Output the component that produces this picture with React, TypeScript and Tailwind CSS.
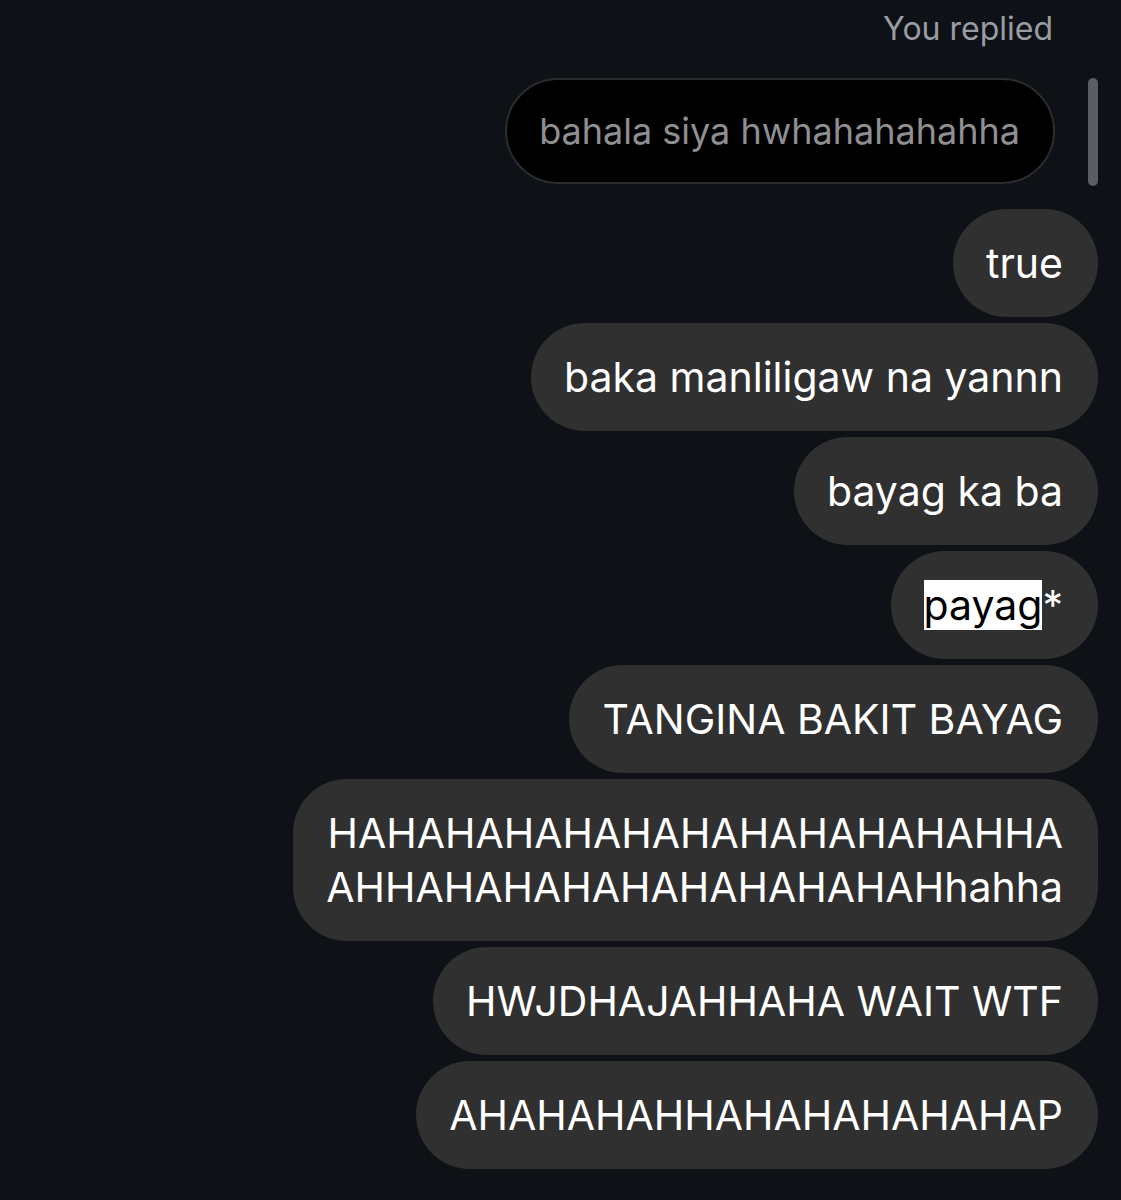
const MESSAGES: string[][] = [
  ['true'],
  ['baka manliligaw na yannn'],
  ['bayag ka ba'],
  [],
  ['TANGINA BAKIT BAYAG'],
  ['HAHAHAHAHAHAHAHAHAHAHAHHA', 'AHHAHAHAHAHAHAHAHAHAHhahha'],
  ['HWJDHAJAHHAHA WAIT WTF'],
  ['AHAHAHAHHAHAHAHAHAHAP'],
];

function Bubble({ children }: { children: React.ReactNode }) {
  return (
    <div className="bg-[#303030] rounded-[54px] pl-[33px] pr-[35px] py-[27px] text-white text-[41px] leading-[54px]">
      {children}
    </div>
  );
}

export default function App() {
  return (
    <div
      className="min-h-[1200px] w-[1121px] bg-[#0e1116] overflow-hidden"
      style={{ fontFamily: 'Inter, "Noto Sans", sans-serif' }}
    >
      <div className="flex flex-col items-end pr-[23px] pt-[9px]">
        {/* reply header */}
        <p className="text-[32px] leading-[40px] text-[#9a9ca3] pr-[45px]">You replied</p>

        <div className="flex items-start gap-[33px] mt-[29px]">
          <div className="bg-black border-2 border-[#2b2c2f] rounded-[54px] pl-[32px] pr-[33px] py-[24px] text-[36px] leading-[54px] text-[#8f8f91]">
            bahala siya hwhahahahahha
          </div>
          <div className="w-[10px] h-[108px] rounded-full bg-[#5b5d62]" />
        </div>

        <div className="flex flex-col items-end gap-[6px] mt-[23px]">
          {MESSAGES.map((lines, i) =>
            i === 3 ? (
              <Bubble key={i}>
                <span className="bg-white text-black">payag</span>*
              </Bubble>
            ) : (
              <Bubble key={i}>
                {lines.map(l => (
                  <div key={l} className="text-right">{l}</div>
                ))}
              </Bubble>
            )
          )}
        </div>
      </div>
    </div>
  );
}
